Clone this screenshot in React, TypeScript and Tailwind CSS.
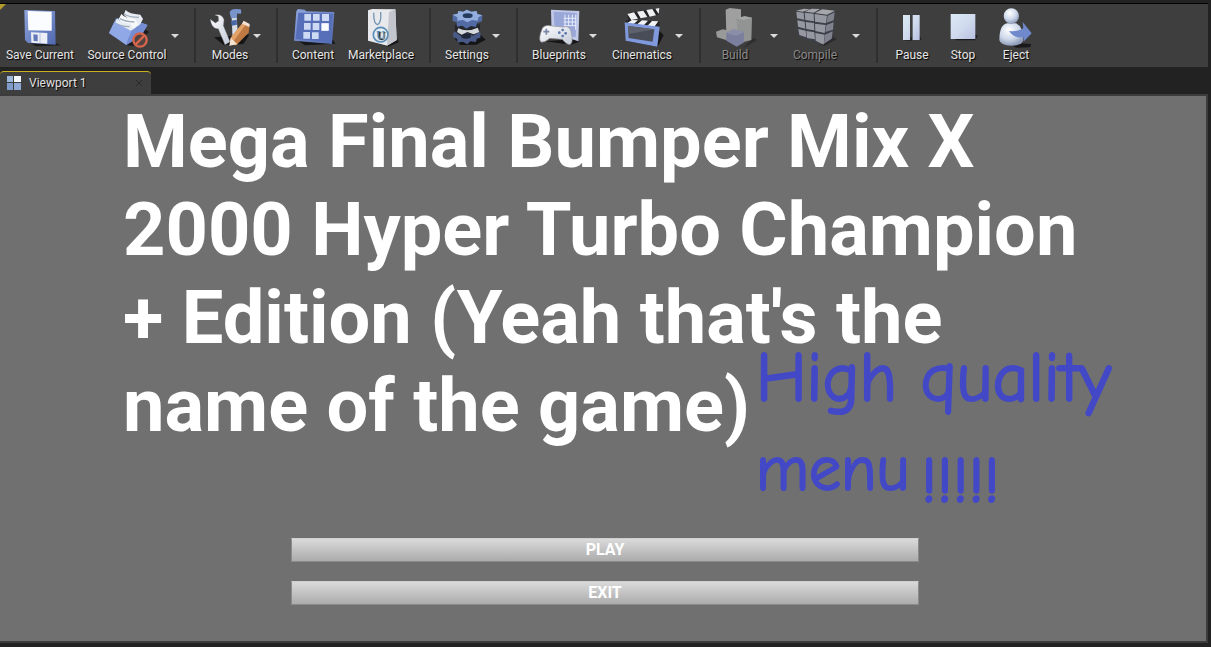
import clsx from "clsx";
import type { ReactNode } from "react";

type Tool = {
  label: string;
  width: string;
  icon: ReactNode;
  menu?: boolean;
  disabled?: boolean;
};

type Group = { width: string; tools: Tool[] };

function Icon({ children }: { children: ReactNode }) {
  return (
    <svg
      viewBox="0 0 144 120"
      aria-hidden="true"
      className="h-10 w-12 shrink-0"
    >
      {children}
    </svg>
  );
}

// shared gradients, referenced by id from every icon
function Gradients() {
  return (
    <svg className="absolute size-0" aria-hidden="true">
      <defs>
        <linearGradient id="blue" x1="0" y1="0" x2="1" y2="1">
          <stop offset="0" stopColor="#8fa5dc" />
          <stop offset="1" stopColor="#5069b0" />
        </linearGradient>
        <linearGradient id="pale" x1="0" y1="0" x2="1" y2="1">
          <stop offset="0" stopColor="#ffffff" />
          <stop offset="1" stopColor="#c3cad8" />
        </linearGradient>
        <linearGradient id="media" x1="0" y1="0" x2="1" y2="1">
          <stop offset="0" stopColor="#dbe9f4" />
          <stop offset="0.5" stopColor="#d0dcee" />
          <stop offset="1" stopColor="#b9c0e0" />
        </linearGradient>
        <radialGradient id="ball" cx="0.4" cy="0.3" r="0.7">
          <stop offset="0" stopColor="#ffffff" />
          <stop offset="0.6" stopColor="#cdd8ea" />
          <stop offset="1" stopColor="#8f9cba" />
        </radialGradient>
      </defs>
    </svg>
  );
}

const saveIcon = (
  <Icon>
    <path d="M40 104 120 106 134 112 60 115Z" fill="#1c1c1e" />
    <path d="M25 6 117 9 119 110 36 105 27 96Z" fill="url(#blue)" />
    <path d="M35 9 107 11 107 68 37 67Z" fill="#fbfcff" />
    <path d="M45 73 94 75 94 107 46 104Z" fill="#eceff7" />
    <path d="M52 79 65 80 65 100 53 99Z" fill="#6178b8" />
    <path d="M72 76v29" stroke="#b8c2dc" strokeWidth="3" />
  </Icon>
);

const sourceIcon = (
  <Icon>
    <path d="M70 112 124 62 138 72 92 114Z" fill="#1d1d20" />
    <path d="M18 75 38 32 62 28 132 50 116 82 70 111Z" fill="#6e87cb" />
    <path d="M62 20 68 6Q78 18 112 20L120 33 106 60Z" fill="#e8edf3" />
    <path d="M63 18Q78 28 108 28" fill="none" stroke="#9eacb9" strokeWidth="4" />
    <path d="M47 34 55 18Q66 31 96 33L105 47 91 77Z" fill="#f6f8fa" />
    <path d="M51 32Q66 41 94 42" fill="none" stroke="#9eacb9" strokeWidth="4" />
    <path d="M34 48 42 31Q54 45 82 47L90 60 77 90Z" fill="#e6ecf1" />
    <path d="M37 45Q51 55 80 56" fill="none" stroke="#9eacb9" strokeWidth="4" />
    <path d="M18 75 34 42 84 68 70 111Z" fill="#91a8e6" />
    <path d="M84 68 118 45 134 51 116 82 70 111Z" fill="#748dd3" />
    <circle cx="111" cy="96" r="20" fill="#51433f" stroke="#d6654c" strokeWidth="7" />
    <path d="M98 109 124 83" stroke="#d6654c" strokeWidth="7" />
  </Icon>
);

const modesIcon = (
  <Icon>
    <path d="M24 88 130 80 112 108 54 112Z" fill="#151517" />
    <path d="M77 28 92 26 96 86 80 98Z" fill="#d7dde6" />
    <path d="M75 38 92 35 93 50 77 53Z" fill="#4867a8" />
    <path d="M71 15Q72 3 89 3L104 4Q108 14 103 18L94 16 92 30 75 31Z" fill="#7894cb" />
    <path
      d="M13 34 28 45 38 39 37 25 27 21Q48 17 54 35L52 53 72 101 57 110 37 62Q17 64 13 34Z"
      fill="url(#pale)"
      stroke="#8c9299"
    />
    <path d="M113 41 131 51 128 74 91 112 72 110 74 89Z" fill="#bf7a43" />
    <path d="M113 41 122 46 83 99 74 89Z" fill="#e3a368" />
    <path d="M74 89 94 109 70 113Z" fill="#f5e5d0" />
    <path d="M113 38 131 48 130 57 108 47Z" fill="#f3e2d3" />
  </Icon>
);

const contentIcon = (
  <Icon>
    <path d="M28 99 132 95 139 107 48 112Z" fill="#17171c" />
    <path d="M22 9 27 3 47 5 52 10 136 12 129 108 15 98Z" fill="url(#blue)" />
    <path d="M28 14 132 17 124 103 20 93Z" fill="#566fb8" />
    <path
      d="M46 18h20v20H46zM72 18h20v20H72zM99 18h21v21H99zM45 45h20v20H45zM71 45h20v21H71zM97 46h22v22H97zM43 72h20v20H43zM69 73h20v20H69z"
      fill="#ced9f4"
    />
    <path d="M98 46h21v22H98z" fill="#f9fbff" />
  </Icon>
);

const marketIcon = (
  <Icon>
    <path d="M34 98 90 111 122 92 125 103 94 116Z" fill="#18181a" />
    <path d="M33 7 46 3 115 4 119 96 90 113 33 98Z" fill="#e8e9ed" />
    <path d="M96 12 115 4 119 96 90 113Z" fill="#c4c6cd" />
    <path d="M50 14Q50 47 61 50Q74 45 71 12" fill="none" stroke="#7394b2" strokeWidth="4" />
    <circle cx="71" cy="80" r="22" fill="#e3edf4" stroke="#5b8db7" strokeWidth="5" />
    <text
      x="71"
      y="93"
      textAnchor="middle"
      fill="#4d82b0"
      className="font-['Liberation_Serif',serif] text-4xl font-bold"
    >
      U
    </text>
  </Icon>
);

const settingsIcon = (
  <Icon>
    <path d="M34 91 104 72 128 95 100 110 52 111Z" fill="#151518" />
    <path
      d="M30 76 44 66 96 65 113 76 112 89 101 92 99 102 82 100 73 109 59 101 44 104 42 92 31 88Z"
      fill="#4a5a86"
    />
    <ellipse cx="69" cy="84" rx="15" ry="8" fill="#1f2638" />
    <path d="M35 50 112 49 108 73 90 83 72 74 52 83 36 70Z" fill="#25262b" />
    <path d="M46 61Q72 74 104 59L109 72 92 79 73 72 56 80 42 72Z" fill="#d6d9dc" />
    <path
      d="M29 20 44 17 46 9 61 11 71 5 85 11 101 9 103 18 118 22 117 40 102 45 99 57 84 54 70 62 58 53 42 56 41 43 29 39Z"
      fill="#526ba5"
    />
    <path
      d="M29 20 44 17 46 9 61 11 71 5 85 11 101 9 103 18 118 22 106 28 104 38 87 36 73 43 60 36 43 38 43 28Z"
      fill="#93aede"
    />
    <ellipse cx="74" cy="23" rx="15" ry="7" fill="#26395f" />
  </Icon>
);

const blueprintsIcon = (
  <Icon>
    <path d="M30 100 116 94 133 101 108 110Z" fill="#151518" />
    <path d="M48 5 133 9 130 100 112 94 50 83Z" fill="#c1c9e8" />
    <path d="M56 11 125 15 122 87 60 81Z" fill="#98a6d8" />
    <path
      d="M90 20v34M101 20v34M112 20v34M122 20v46M86 31h37M86 42h37M86 53h37"
      stroke="#e7ecfa"
      strokeWidth="3"
    />
    <path
      d="M23 59Q33 49 50 54L84 57Q101 51 108 69Q116 103 106 109Q95 112 82 94L44 91Q28 105 18 102Q8 94 23 59Z"
      fill="url(#pale)"
      stroke="#95969c"
      strokeWidth="2"
    />
    <path d="M34 62v18M25 71h18" stroke="#7a86a6" strokeWidth="5" />
    <circle cx="83" cy="66" r="4" fill="#5d76ad" />
    <circle cx="73" cy="74" r="4" fill="#5d76ad" />
    <circle cx="92" cy="76" r="4" fill="#5d76ad" />
    <circle cx="83" cy="84" r="4" fill="#5d76ad" />
  </Icon>
);

const cinematicsIcon = (
  <Icon>
    <path d="M30 100 124 68 137 82 119 116Z" fill="#151517" />
    <path d="M27 20 35 14 124 0 122 20 33 38Z" fill="#242426" />
    <path
      d="M28 18 48 13 60 32 40 36ZM57 11 76 8 88 27 68 31ZM85 6 103 3 114 22 95 26ZM112 2 124 0 122 18Z"
      fill="#eef0f2"
    />
    <path d="M26 36 124 40 125 56 20 44Z" fill="#242426" />
    <path
      d="M42 36 60 37 46 49 27 46ZM72 37 90 38 76 53 56 50ZM102 39 121 40 109 56 88 54Z"
      fill="#f3f4f6"
    />
    <path d="M20 43 125 56 118 116 23 98Z" fill="#7f99dc" />
    <path d="M30 54 109 64 104 101 32 90Z" fill="#494d57" />
    <path d="M30 54 109 64 32 78Z" fill="#5d626d" />
  </Icon>
);

const buildIcon = (
  <Icon>
    <path d="M40 92 100 116 128 89 137 96 102 118Z" fill="#252525" />
    <path d="M44 5 56 0 90 4 90 85 46 80Z" fill="#d2d3d2" />
    <path d="M76 31 101 25 123 29 121 96 84 106Z" fill="#bfc1c1" />
    <path d="M76 31 101 25 123 29 99 36Z" fill="#e2e2e2" />
    <path d="M15 71 35 64 59 69 55 99 18 88Z" fill="#cbcccc" />
    <path d="M46 75 68 64 99 73 98 104 77 116 46 98Z" fill="#9aa2d0" />
    <path d="M46 75 68 64 99 73 76 83Z" fill="#b4bae2" />
  </Icon>
);

const compileIcon = (
  <Icon>
    <path d="M85 110 117 80 137 94 100 114Z" fill="#222224" />
    <path d="M18 9 73 0 132 8 125 91 90 110 21 86Z" fill="#3d414e" />
    <path
      d="M15 8 39 2 57 4 35 11ZM42 11 62 2 87 3 68 14ZM72 15 94 4 132 8 108 20Z"
      fill="#dcdee4"
    />
    <path
      d="M16 11 38 14 40 35 18 31ZM41 14 68 17 69 40 43 36ZM71 18 108 23 105 46 72 41ZM19 37 41 41 43 62 21 56ZM44 42 69 45 70 67 46 63ZM72 47 104 51 101 75 73 69ZM22 63 44 68 46 88 25 81ZM46 69 70 73 72 94 48 90ZM73 75 101 80 98 110 74 98Z"
      fill="#c6c9d6"
    />
    <path
      d="M110 23 131 13 128 37 107 44ZM106 51 128 43 126 65 103 72ZM102 80 125 70 122 92 99 107Z"
      fill="#a2a5b6"
    />
  </Icon>
);

const pauseIcon = (
  <Icon>
    <path d="M66 88h6v10H50v-4zM95 82l6 14H80v-4z" fill="#242426" />
    <path d="M45 21h21v75H45zM74 21h21v75H74z" fill="url(#media)" />
  </Icon>
);

const stopIcon = (
  <Icon>
    <path d="M108 78 116 84 108 97H50V90Z" fill="#1d1d1f" />
    <path d="M35 18h74v75H35z" fill="url(#media)" />
  </Icon>
);

const ejectIcon = (
  <Icon>
    <path d="M50 104 118 108 114 118 72 119Z" fill="#1a1a1c" />
    <path
      d="M22 96Q22 50 46 46H72Q94 56 94 97Q90 113 58 113Q24 112 22 96Z"
      fill="url(#ball)"
    />
    <circle cx="58" cy="24" r="23" fill="url(#ball)" />
    <path d="M51 69Q73 73 94 61L92 42 119 76 96 100 94 87Q67 93 51 69Z" fill="#6f89cc" />
  </Icon>
);

const groups: Group[] = [
  {
    width: "w-[194px] gap-1",
    tools: [
      { label: "Save Current", width: "w-20", icon: saveIcon },
      { label: "Source Control", width: "w-[86px]", icon: sourceIcon, menu: true },
    ],
  },
  {
    width: "w-[82px] pl-3",
    tools: [{ label: "Modes", width: "w-11", icon: modesIcon, menu: true }],
  },
  {
    width: "w-[153px] pl-1",
    tools: [
      { label: "Content", width: "w-[62px]", icon: contentIcon },
      { label: "Marketplace", width: "w-[74px]", icon: marketIcon },
    ],
  },
  {
    width: "w-[87px] pl-3",
    tools: [{ label: "Settings", width: "w-12", icon: settingsIcon, menu: true }],
  },
  {
    width: "w-[183px] gap-3 pl-3",
    tools: [
      { label: "Blueprints", width: "w-[58px]", icon: blueprintsIcon, menu: true },
      { label: "Cinematics", width: "w-16", icon: cinematicsIcon, menu: true },
    ],
  },
  {
    width: "w-[177px]",
    tools: [
      { label: "Build", width: "w-[68px]", icon: buildIcon, menu: true, disabled: true },
      { label: "Compile", width: "w-[72px]", icon: compileIcon, menu: true, disabled: true },
    ],
  },
  {
    width: "pl-2.5",
    tools: [
      { label: "Pause", width: "w-12", icon: pauseIcon },
      { label: "Stop", width: "w-[54px]", icon: stopIcon },
      { label: "Eject", width: "w-[52px]", icon: ejectIcon },
    ],
  },
];

function ToolButton({ tool }: { tool: Tool }) {
  return (
    <div className="flex">
      <button
        disabled={tool.disabled}
        className={clsx(
          "flex flex-col items-center text-xs whitespace-nowrap [text-shadow:1px_1px_1px_#000]",
          tool.width,
          tool.disabled ? "text-[#8a8a8a]" : "text-[#e6e6e6]"
        )}
      >
        <span className={clsx("flex", tool.disabled && "opacity-65")}>
          {tool.icon}
        </span>
        <span className="leading-[15px]">{tool.label}</span>
      </button>
      {tool.menu && (
        <button
          aria-label={`${tool.label} options`}
          className="flex w-2.5 justify-center pt-[26px]"
        >
          <svg viewBox="0 0 8 4" className="h-1 w-2" aria-hidden="true">
            <path d="M0 0h8L4 4z" fill="#dcdcdc" />
          </svg>
        </button>
      )}
    </div>
  );
}

function Toolbar() {
  return (
    <header className="relative mt-[3px] mr-[3px] flex border-t border-black bg-[#3e3e3e] pt-1 pb-1">
      <svg viewBox="0 0 6 6" className="absolute top-0 left-0 size-1.5" aria-hidden="true">
        <path d="M0 0h6L0 6z" fill="#b39a2c" />
      </svg>
      {groups.map((g, i) => (
        <div
          key={i}
          className={clsx("flex", g.width, i > 0 && "border-l-2 border-[#2f2f2f]")}
        >
          {g.tools.map((t) => (
            <ToolButton key={t.label} tool={t} />
          ))}
        </div>
      ))}
    </header>
  );
}

function ViewportTab() {
  return (
    <div className="flex h-[27px] items-end">
      <div className="flex h-[23px] w-[151px] items-center rounded-t-sm border-t border-[#c9b21f] bg-[#3e3e3e] pr-2 pl-[7px] text-xs text-[#e0e0e0]">
        <svg viewBox="0 0 14 14" className="mr-2 size-3.5" aria-hidden="true">
          <path d="M0 0h6v6H0z" fill="#9db6dc" />
          <path d="M7 0h7v6H7z" fill="#f4f8ff" />
          <path d="M0 7h6v7H0z" fill="#7e9bc9" />
          <path d="M7 7h7v7H7z" fill="#8ea9d5" />
        </svg>
        <span className="[text-shadow:1px_1px_1px_#000]">Viewport 1</span>
        <button aria-label="Close tab" className="ml-auto">
          <svg viewBox="0 0 8 8" className="size-2" aria-hidden="true">
            <path d="M1 1l6 6M7 1L1 7" stroke="#2a2a2a" strokeWidth="1" />
          </svg>
        </button>
      </div>
    </div>
  );
}

function MenuButton({ children }: { children: ReactNode }) {
  return (
    <button className="h-6 w-full border border-[#8b8b8b] border-t-[#cfcfcf] bg-linear-to-b from-[#dadada] to-[#acacac] text-base leading-[22px] font-bold text-white">
      {children}
    </button>
  );
}

export default function App() {
  return (
    <div className="flex min-h-screen flex-col overflow-hidden bg-[#222] font-[Roboto,sans-serif]">
      <Gradients />
      <Toolbar />
      <ViewportTab />
      <main className="relative mr-[3px] mb-1 flex-1 border-t-2 border-r-2 border-b-2 border-[#3c3c3c] bg-[#707070] pt-0.5 pl-1">
        <h1 className="mx-auto max-w-[964px] text-[74px] leading-[88px] font-bold text-white">
          Mega Final Bumper Mix X 2000 Hyper Turbo Champion + Edition (Yeah
          that's the name of the game)
        </h1>
        {/* scribbled note on top of the viewport */}
        <div className="absolute top-[238px] left-[756px] font-['Comic_Sans_MS','Comic_Neue',Lato,sans-serif] leading-[90px] whitespace-nowrap text-[#4349c6] [-webkit-text-stroke:2px_#4349c6]">
          <p className="text-[70px]">High quality</p>
          <p className="flex gap-3 text-[64px]">
            <span>menu</span>
            <span className="pt-3">!!!!!</span>
          </p>
        </div>
        <div className="mx-auto mt-[88px] flex w-[628px] max-w-full flex-col gap-[19px]">
          <MenuButton>PLAY</MenuButton>
          <MenuButton>EXIT</MenuButton>
        </div>
      </main>
    </div>
  );
}
